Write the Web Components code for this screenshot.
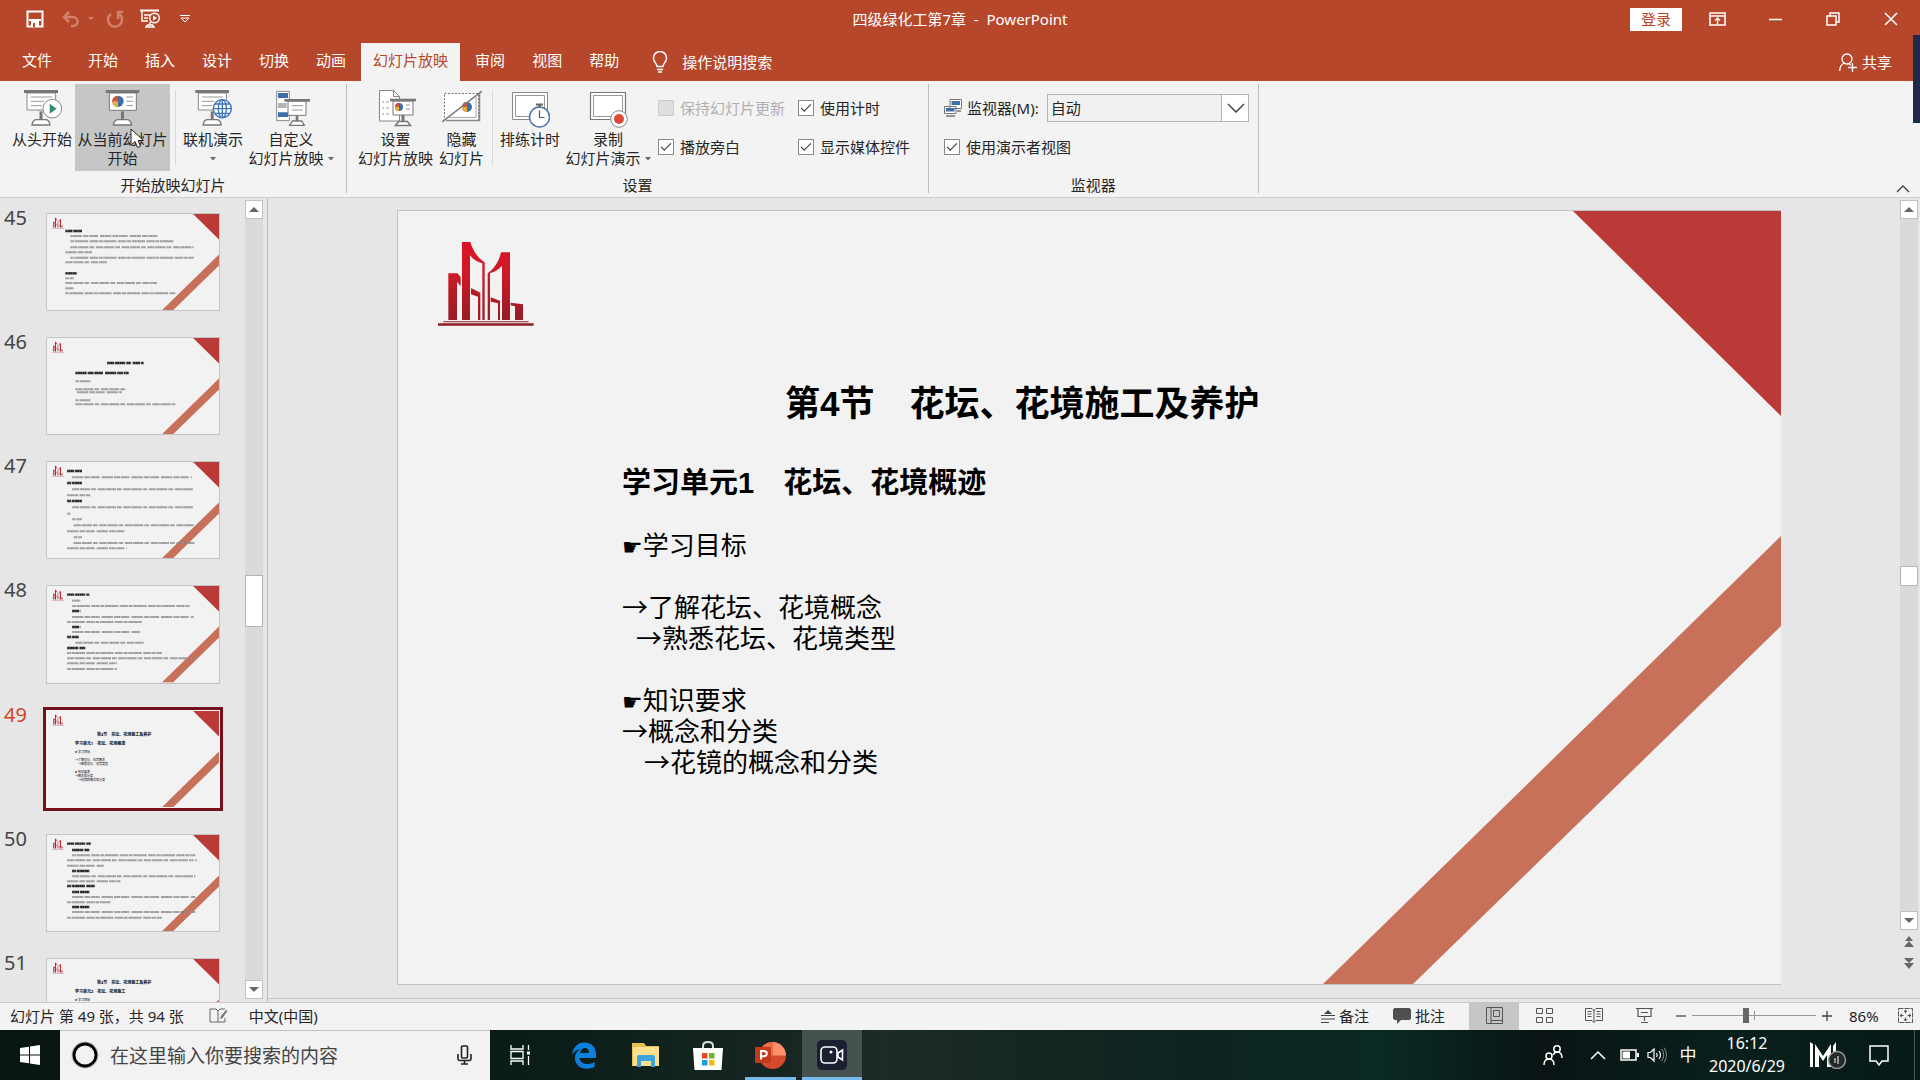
<!DOCTYPE html>
<html lang="zh-CN">
<head>
<meta charset="utf-8">
<title>四级绿化工第7章 - PowerPoint</title>
<style>
    html, body { margin: 0; height: 100%; }
    body {
        overflow: hidden;
        color: #262626;
        font: 15px/20px "Noto Sans", "Noto Sans CJK SC", sans-serif;
    }
</style>
</head>
<body>
<ppt-desktop></ppt-desktop>

<script>
// [width, height, viewBox, body]
const easel = (x, w) => `
    <g fill="#777"><rect x="${x}" y="270" width="${w}" height="9"/></g>
    <path d="M${x + w / 2} 334v28" stroke="#777" stroke-width="9"/>
    <path d="M${x + w / 2 - 27} 375q2-16 14-16h26q12 0 14 16z" fill="#fff" stroke="#777" stroke-width="4"/>`;
const pie = (x, y, r) => `
    <circle cx="${x}" cy="${y}" r="${r}" fill="#3f6fa8"/>
    <path d="M${x} ${y}V${y - r}A${r} ${r} 0 0 0 ${x} ${y + r}z" fill="#d9532f"/>
    <path d="M${x} ${y}L${x - r} ${y}A${r} ${r} 0 0 0 ${x} ${y + r}z" fill="#e9b13b"/>`;

const ICONS = {
    save: [18, 18, '0 0 18 18', '<path d="M1.5 1.5h15v15h-15z" fill="none" stroke="#fff" stroke-width="2"/><path d="M3 9h12v2H3zM5 11h8v6H5z" fill="#fff"/><path d="M7 13h2v4H7z" fill="#b7472a"/>'],
    undo: [18, 18, '0 0 18 18', '<path d="M2 7h9a4 4 0 0 1 0 9H9M7 2L2 7l5 5" fill="none" stroke="#d0806b" stroke-width="2.5"/>'],
    redo: [18, 18, '0 0 18 18', '<path d="M5 4a7 7 0 1 0 8 0M12 9V2h5" fill="none" stroke="#d0806b" stroke-width="2.5"/>'],
    dot: [6, 4, '0 0 6 4', '<path d="M0 0h6L3 3z" fill="#d0806b"/>'],
    show: [20, 20, '0 0 20 20', '<g fill="none" stroke="#fff" stroke-width="1.4"><path d="M0 1.5h19" stroke-width="2"/><path d="M2 2v10h6M4 6h6M4 9h4M10 13v3M6 18l1.500-2h5l1.500 2z"/><circle cx="14.500" cy="9" r="4.800"/></g><path d="M13 6.500v5l4-2.500z" fill="#fff"/>'],
    more: [10, 8, '0 0 10 8', '<path d="M0 .5h10M1 3h8L5 7z" fill="none" stroke="#fff"/>'],
    ribbonview: [17, 14, '0 0 17 14', '<path d="M1 1h15v12H1zM1 4h15" fill="none" stroke="#fff" stroke-width="1.600"/><path d="M8.500 12V6M6 8.500L8.500 6 11 8.500" fill="none" stroke="#fff" stroke-width="1.400"/>'],
    min: [13, 14, '0 0 13 14', '<path d="M0 7.500h13" stroke="#fff" stroke-width="1.500"/>'],
    restore: [14, 14, '0 0 14 14', '<path d="M1 4h9v9H1zM4 4V1h9v9h-3" fill="none" stroke="#fff" stroke-width="1.500"/>'],
    close: [14, 14, '0 0 14 14', '<path d="M1 1l12 12M13 1L1 13" stroke="#fff" stroke-width="1.500"/>'],
    bulb: [16, 22, '0 0 16 22', '<path d="M5 15.500c0-3-3.500-4-3.500-8.500a6.500 6.500 0 0 1 13 0c0 4.500-3.500 5.500-3.500 8.500zM5 18.500h6M6 21h4" fill="none" stroke="#fff" stroke-width="1.500"/>'],
    share: [19, 19, '0 0 19 19', '<circle cx="8" cy="6" r="5" fill="none" stroke="#fff" stroke-width="1.300"/><path d="M.700 18c0-4 2-7 5-8M10 11l2 1M9 14.500h9M13.500 10v9" fill="none" stroke="#fff" stroke-width="1.300"/>'],
    start: [40, 38, '66 270 120 114', `<path d="M81 279h86v51H81z" fill="#fff" stroke="#888" stroke-width="3"/><path d="M92 291h64M92 304h40M92 317h34" stroke="#999" stroke-width="3"/>${easel(72, 102)}<circle cx="157" cy="326" r="28" fill="#fff" stroke="#888" stroke-width="3"/><path d="M149 311v30l21-15z" fill="#2f8f6b"/>`],
    current: [40, 38, '307 270 120 114', `${easel(315, 101)}<path d="M326 279h81v52h-81z" fill="#fff" stroke="#777" stroke-width="3"/>${pie(352, 304, 17)}<path d="M377 291h20M377 304h20M377 317h20" stroke="#999" stroke-width="3"/>`],
    online: [40, 38, '579 270 120 114', `<path d="M595 279h84v51h-84z" fill="#fff" stroke="#888" stroke-width="3"/><path d="M606 291h62M606 304h36M606 317h30" stroke="#999" stroke-width="3"/>${easel(586, 101)}<g fill="#fff" stroke="#3f74b5" stroke-width="4"><circle cx="667" cy="326" r="27"/><ellipse cx="667" cy="326" rx="12" ry="27"/><path d="M667 299v54M640 326h54M645 312h44M645 340h44" fill="none"/></g>`],
    custom: [40, 38, '810 270 120 114', '<path d="M827 274h38v88h-38z" fill="#fff" stroke="#888" stroke-width="3"/><path d="M831 279h30v15h-30zM831 337h30v14h-30z" fill="#3f6fa8"/><path d="M831 309h26v15h-26z" fill="#b5b5b5"/><path d="M861 303h54v43h-54z" fill="#fff" stroke="#777" stroke-width="3"/><path d="M850 301h77" stroke="#777" stroke-width="8"/><path d="M872 317h34M872 330h34" stroke="#999" stroke-width="3"/><path d="M888 346v20" stroke="#777" stroke-width="8"/><path d="M866 376l8-13h28l8 13z" fill="#fff" stroke="#777" stroke-width="4"/>'],
    setup: [40, 38, '376 90 40 38', '<path d="M379.500 90.500h14l6 6V121h-20z" fill="#fff" stroke="#888"/><path d="M393.500 90.500v6h6" fill="none" stroke="#888"/><path d="M382 102h7M382 108h7M382 114h7" stroke="#999" stroke-dasharray="2 2 4"/><path d="M393 101h20v14h-20z" fill="#fff" stroke="#777"/><path d="M390 100h26" stroke="#777" stroke-width="2.600"/><path d="M403 115v8" stroke="#777" stroke-width="3"/><path d="M395.500 125.500l3-4h9l3 4z" fill="#fff" stroke="#777" stroke-width="1.500"/>' + pie(399, 107, 4) + '<path d="M406 105h4M406 109h4" stroke="#999"/>'],
    hide: [40, 38, '442 90 40 38', '<path d="M444.500 93.500h34v27h-34z" fill="#fff" stroke="#777" stroke-dasharray="2 1.500"/><path d="M446 120.500h33.500V93" fill="none" stroke="#888" stroke-width="1.500"/><path d="M449 117.500h27V97" fill="none" stroke="#aaa"/>' + pie(467, 107, 5) + '<path d="M442 122l40-31" stroke="#777" stroke-width="1.500"/>'],
    rehearse: [40, 38, '511 90 40 38', '<path d="M513.500 92.500h35v27h-35z" fill="#fff" stroke="#888"/><path d="M516.500 95.500h29v21h-29z" fill="none" stroke="#999"/><circle cx="540.500" cy="117" r="10" fill="#fff" stroke="#4a77b0" stroke-width="1.500"/><path d="M537 104.500h7M540.500 104v4" stroke="#666" stroke-width="2.200"/><path d="M540.500 110.500v7h5" fill="none" stroke="#555" stroke-width="1.200"/>'],
    record: [40, 38, '589 90 40 38', '<path d="M591.500 92.500h35v27h-35z" fill="#fff" stroke="#777" stroke-width="1.200"/><path d="M594.500 95.500h29v21h-29z" fill="none" stroke="#999"/><circle cx="620" cy="119" r="8.300" fill="#fff" stroke="#888"/><circle cx="620" cy="119" r="5" fill="#dd4b39"/>'],
    monitors: [18, 18, '0 0 18 18', '<path d="M6 .5h11.500v9H6zM.500 7.500H12v7H.500z" fill="#fff" stroke="#777"/><path d="M7.500 2h8.500v4H7.500zM2 9h8.500v3.500H2z" fill="#3f6fa8"/><path d="M2 17h9M13 12h4" stroke="#777" stroke-width="1.500"/>'],
    down: [18, 10, '0 0 18 10', '<path d="M1 1l8 8 8-8" fill="none" stroke="#444" stroke-width="1.500"/>'],
    collapse: [14, 8, '0 0 14 8', '<path d="M1 7l6-6 6 6" fill="none" stroke="#444" stroke-width="1.300"/>'],
    caret: [6, 4, '0 0 6 4', '<path d="M0 0h6L3 3.500z" fill="#666"/>'],
    triup: [10, 5, '0 0 10 5', '<path d="M0 5L5 0l5 5z" fill="#666"/>'],
    tridown: [10, 5, '0 0 10 5', '<path d="M0 0l5 5 5-5z" fill="#666"/>'],
    prev: [10, 11, '0 0 10 11', '<path d="M1 5l4-5 4 5zM0 11l5-6 5 6z" fill="#666"/>'],
    next: [10, 11, '0 0 10 11', '<path d="M0 0h10L5 5zM0 5h10l-5 6z" fill="#666"/>'],
    spell: [19, 15, '0 0 19 15', '<path d="M9 3v11H1V1h6l2 2 2-2h5M9 14h7v-4" fill="none" stroke="#666"/><path d="M11 11l1-3 5-6 1.500 1-5 7z" fill="#777"/>'],
    notes: [14, 14, '0 0 14 14', '<path d="M3 5l4-4 4 4z" fill="#444"/><path d="M0 6.500h14M0 10h14M0 13.500h8" stroke="#444" stroke-width="1.200"/>'],
    comment: [18, 16, '0 0 18 16', '<path d="M1.500 0h15L18 1.500v9L16.500 12H8l-4 4v-4H1.500L0 10.500v-9z" fill="#505050"/>'],
    normal: [17, 17, '0 0 17 17', '<path d="M.500.500h16v16H.500zM5 .500v16M7.500 3.500h6v6h-6zM5 13.500h11" fill="none" stroke="#555"/>'],
    sorter: [17, 17, '0 0 17 17', '<path d="M.500 1.500h6v5h-6zM10.500 1.500h6v5h-6zM.500 10.500h6v5h-6zM10.500 10.500h6v5h-6z" fill="none" stroke="#555"/>'],
    reading: [18, 17, '0 0 18 17', '<path d="M.500 1.500H7l2 2 2-2h6.500v12H11l-2 2-2-2H.500zM9 3v12M2.500 4.500h4M2.500 7h4M2.500 9.500h4M11.500 4.500h4M11.500 7h4M11.500 9.500h4" fill="none" stroke="#555"/>'],
    slideshow: [17, 17, '0 0 17 17', '<path d="M0 1.500h17M2 2v7.500h13V2M5 5.500h7M8.500 10v4M5 15.500h7" fill="none" stroke="#555" stroke-width="1.200"/>'],
    fit: [15, 15, '0 0 15 15', '<path d="M.500.500h14v14H.500z" fill="none" stroke="#555" stroke-dasharray="5 1"/><path d="M7.500 2v3.500M7.500 9.500V13M2 7.500h3.500M9.500 7.500H13M6 4l1.500-2L9 4M6 11l1.500 2L9 11M4 6L2 7.500 4 9M11 6l2 1.500L11 9" fill="none" stroke="#555"/>'],
    minus: [10, 10, '0 0 10 10', '<path d="M0 5h10" stroke="#444" stroke-width="1.300"/>'],
    plus: [10, 10, '0 0 10 10', '<path d="M0 5h10M5 0v10" stroke="#444" stroke-width="1.300"/>'],
    windows: [20, 20, '0 0 20 20', '<path d="M0 3l9-1.300v7.800H0zM10 1.500L20 0v9.500H10zM0 10.500h9v7.800L0 17zM10 10.500h10V20l-10-1.500z" fill="#fff"/>'],
    cortana: [28, 28, '0 0 28 28', '<circle cx="14" cy="14" r="12.500" fill="none" stroke="#bbb" stroke-width="2"/><circle cx="14" cy="14" r="11" fill="none" stroke="#000" stroke-width="2.800"/>'],
    mic: [15, 20, '0 0 15 20', '<rect x="4.500" y="1" width="6" height="12" rx="1" fill="none" stroke="#222" stroke-width="1.600"/><path d="M1 9v4.500q0 2 2 2h9q2 0 2-2V9M7.500 15v4M4 19h7" fill="none" stroke="#222" stroke-width="1.600"/>'],
    taskview: [21, 20, '0 0 21 20', '<path d="M1 0v4h12V0M1 20v-4h12v4M1 6.500h12v7H1zM18.500 0v5M18.500 11v9" fill="none" stroke="#fff" stroke-width="1.300"/><path d="M17 6.500h3v3h-3z" fill="#fff"/>'],
    edge: [26, 27, '0 0 26 27', '<path d="M1 13C2 5 7 .500 13.500.500 21 .500 25 6 25 12v4H8.500c.500 4 4 6 8 6 3 0 5-.700 7-2v5c-2.500 1.300-5 1.700-8 1.700C8.500 26.700 4 22 4 16c0-4 2-7 5-9C5 8 2.500 10 1 13zm8-2h9c0-3-1.500-5-4-5s-4.500 2-5 5z" fill="#0e7fdc"/>'],
    folder: [28, 24, '0 0 28 24', '<path d="M0 0h12l2 3h13v20H0z" fill="#e8bf56"/><path d="M1 4h26v19H1z" fill="#fbe08d"/><path d="M5 24V14q0-2 2-2h14q2 0 2 2v10h-4v-6H9v6z" fill="#3fa4dd"/>'],
    store: [30, 29, '0 0 30 29', '<path d="M10 8V5q0-4 5-4t5 4v3" fill="none" stroke="#ddd" stroke-width="2"/><path d="M0 7h30l-1.500 22h-27z" fill="#fff"/><path d="M9 12h5.500v5.500H9z" fill="#e8482b"/><path d="M16 12h5.500v5.500H16z" fill="#6fb52c"/><path d="M9 19h5.500v5.500H9z" fill="#1b9de2"/><path d="M16 19h5.500v5.500H16z" fill="#fab802"/>'],
    ppt: [31, 27, '0 0 31 27', '<circle cx="17.500" cy="13.500" r="13.500" fill="#d6492b"/><path d="M17.500 0A13.500 13.500 0 0 1 31 13.500H17.500z" fill="#ff8f6b"/><path d="M4 13.500h13.500V0A13.500 13.500 0 0 0 4 13.500z" fill="#ed6c47"/><rect y="5" width="16" height="16" rx="1" fill="#c13b1b"/><path d="M6 17.500V9h3q2.800 0 2.800 2.600T9 14.200H6" fill="none" stroke="#fff" stroke-width="2"/>'],
    recorder: [30, 30, '0 0 30 30', '<rect width="30" height="30" rx="5" fill="#1b2030"/><rect x="4" y="7" width="16" height="16" rx="4" fill="none" stroke="#fff" stroke-width="1.600"/><circle cx="14" cy="12" r="1.500" fill="#fff"/><path d="M21 13l4.500-3v10L21 17z" fill="none" stroke="#fff" stroke-width="1.600"/>'],
    people: [20, 20, '0 0 20 20', '<g fill="none" stroke="#fff" stroke-width="1.500"><circle cx="6" cy="11" r="3"/><path d="M1 20c0-4 2-6 5-6s5 2 5 6"/><circle cx="14" cy="4" r="3.200"/><path d="M10 10c1-2 2-3 4-3 3 0 5 2 5 6"/></g>'],
    trayup: [16, 10, '0 0 16 10', '<path d="M1 9l7-7 7 7" fill="none" stroke="#fff" stroke-width="1.500"/>'],
    battery: [19, 12, '0 0 19 12', '<path d="M1 1h15v10H1z" fill="none" stroke="#fff" stroke-width="1.500"/><path d="M2.500 2.500H10v7H2.500zM17 4h2v4h-2z" fill="#fff"/>'],
    sound: [20, 16, '0 0 20 16', '<path d="M1 5.500h2.500L7 2v12l-3.500-3.500H1zM9.500 6q1.500 2 0 4M12 4q3 4 0 8" fill="none" stroke="#fff" stroke-width="1.200"/><path d="M14.500 2q4.500 6 0 12M17 .500q5 7.500 0 15" fill="none" stroke="#888"/>'],
    mlogo: [38, 28, '0 0 38 28', '<path d="M1 1l3 2v23H1zM6 26V3l8 12 8-12v23h-4V14l-4 6-4-6v12zM24 26V5l3-4v25z" fill="#fff"/><circle cx="28" cy="19" r="8.500" fill="#222b29" stroke="#999" stroke-width="1.500"/><path d="M29 15v8M26 17v5" stroke="#bbb" stroke-width="1.500"/>'],
    notify: [20, 21, '0 0 20 21', '<path d="M1 1h18v15h-6l-3 4-3-4H1z" fill="none" stroke="#fff" stroke-width="1.500"/>'],
    cursor: [15, 21, '0 0 15 21', '<path d="M1 1v16l4-3.500 2.500 6 3-1.300L8 12.500h5.500z" fill="#fff" stroke="#222"/>']
};

class AppIcon extends HTMLElement {
    connectedCallback() {
        const [w, h, box, body] = ICONS[this.getAttribute('name')];
        this.attachShadow({ mode: 'open' }).innerHTML = `
            <style>:host { display: inline-flex; flex: none; } svg { display: block; }</style>
            <svg width="${w}" height="${h}" viewBox="${box}" aria-hidden="true">${body}</svg>`;
    }
}

class PptDesktop extends HTMLElement {
    connectedCallback() {
        this.attachShadow({ mode: 'open' }).innerHTML = `
            <style>
                :host { display: grid; grid-template-rows: auto auto auto minmax(0, 1fr) auto auto; height: 100vh; position: relative; }
                .edge { position: absolute; right: 0; top: 35px; width: 7px; height: 88px; background: #1f2a48; }
                .pointer { position: absolute; left: 130px; top: 128px; }
            </style>
            <title-bar></title-bar>
            <tab-strip></tab-strip>
            <ppt-ribbon></ppt-ribbon>
            <work-area></work-area>
            <status-bar></status-bar>
            <task-bar></task-bar>
            <div class="edge"></div>
            <app-icon class="pointer" name="cursor"></app-icon>`;
    }
}

class TitleBar extends HTMLElement {
    connectedCallback() {
        this.attachShadow({ mode: 'open' }).innerHTML = `
            <style>
                :host { display: grid; grid-template-columns: 1fr auto 1fr; align-items: center; height: 38px; padding-bottom: 5px; background: #b7472a; color: #fff; }
                button { display: flex; align-items: center; justify-content: center; padding: 0; border: 0; background: none; font: inherit; }
                .quick { display: flex; align-items: center; padding-left: 26px; }
                .quick button { margin-right: 16px; }
                .quick .undo { margin-right: 8px; margin-left: 2px; }
                .quick .small { margin-right: 12px; }
                .quick .show { margin-right: 20px; }
                .title { white-space: pre; }
                .right { display: flex; justify-content: flex-end; align-items: center; }
                .right button { width: 58px; height: 38px; }
                .right .login { width: 52px; height: 23px; margin-right: 6px; background: #fff; color: #b7472a; }
            </style>
            <div class="quick">
                <button aria-label="保存"><app-icon name="save"></app-icon></button>
                <button class="undo" aria-label="撤消"><app-icon name="undo"></app-icon></button>
                <button class="small" aria-label="撤消选项"><app-icon name="dot"></app-icon></button>
                <button aria-label="恢复"><app-icon name="redo"></app-icon></button>
                <button class="show" aria-label="从头放映"><app-icon name="show"></app-icon></button>
                <button aria-label="自定义工具栏"><app-icon name="more"></app-icon></button>
            </div>
            <div class="title">四级绿化工第7章  -  PowerPoint</div>
            <div class="right">
                <button class="login">登录</button>
                <button aria-label="功能区显示选项"><app-icon name="ribbonview"></app-icon></button>
                <button aria-label="最小化"><app-icon name="min"></app-icon></button>
                <button aria-label="向下还原"><app-icon name="restore"></app-icon></button>
                <button aria-label="关闭"><app-icon name="close"></app-icon></button>
            </div>`;
    }
}

class TabStrip extends HTMLElement {
    connectedCallback() {
        const tabs = ['开始', '插入', '设计', '切换', '动画', '幻灯片放映', '审阅', '视图', '帮助'];
        this.attachShadow({ mode: 'open' }).innerHTML = `
            <style>
                :host { display: flex; gap: 3px; height: 38px; background: #b7472a; }
                button { display: flex; align-items: center; gap: 14px; padding: 0 12px 4px; border: 0; background: none; color: #fff; font: inherit; }
                button.file { padding-right: 21px; padding-left: 22px; }
                button.active { background: #f3f3f3; color: #b7472a; }
                button.tell { padding-left: 18px; padding-bottom: 1px; }
                button.share { margin-left: auto; padding-right: 28px; padding-bottom: 0; gap: 4px; }
            </style>
            <button class="file">文件</button>
            ${tabs.map(t => `<button class="${t === '幻灯片放映' ? 'active' : ''}">${t}</button>`).join('')}
            <button class="tell"><app-icon name="bulb"></app-icon>操作说明搜索</button>
            <button class="share"><app-icon name="share"></app-icon>共享</button>`;
    }
}

class RibbonGroup extends HTMLElement {
    connectedCallback() {
        this.attachShadow({ mode: 'open' }).innerHTML = `
            <style>
                :host { display: block; height: 109px; border-right: 1px solid #bdbdbd; }
                .items { display: flex; height: 91px; padding: var(--pad); box-sizing: border-box; }
                .name { text-align: center; line-height: 20px; }
            </style>
            <div class="items"><slot></slot></div>
            <div class="name">${this.getAttribute('name')}</div>`;
    }
}

class RibbonButton extends HTMLElement {
    connectedCallback() {
        this.attachShadow({ mode: 'open' }).innerHTML = `
            <style>
                :host { display: flex; height: 87px; }
                button { flex: 1; display: flex; flex-direction: column; align-items: center; padding: 6px 0 0; border: 0; background: none; color: inherit; font: inherit; line-height: 19px; white-space: nowrap; }
                :host([hot]) button { background: #c6c6c6; }
                app-icon { margin-bottom: 2px; }
                span { display: flex; align-items: center; gap: 4px; min-height: 19px; }
                span app-icon { margin: 0; }
            </style>
            <button>
                <app-icon name="${this.getAttribute('icon')}"></app-icon>
                <span>${this.getAttribute('top')}</span>
                <span>${this.getAttribute('bottom') || ''}${this.hasAttribute('menu') ? '<app-icon name="caret"></app-icon>' : ''}</span>
            </button>`;
    }
}

class RibbonCheck extends HTMLElement {
    connectedCallback() {
        const state = this.hasAttribute('off') ? 'disabled' : 'checked';
        this.attachShadow({ mode: 'open' }).innerHTML = `
            <style>
                :host { display: flex; align-items: center; gap: 6px; height: 28px; }
                input { appearance: none; display: grid; place-items: center; width: 16px; height: 16px; margin: 0; border: 1px solid #8a8a8a; background: #fff; }
                input:checked::before { content: ""; width: 9px; height: 4px; margin-bottom: 3px; border: solid #333; border-width: 0 0 1px 1px; transform: rotate(-45deg); }
                input:disabled { border-color: #ccc; background: #dedede; }
                input:disabled + label { color: #b0b0b0; }
            </style>
            <input type="checkbox" id="box" ${state}>
            <label for="box"><slot></slot></label>`;
    }
}

class MonitorPicker extends HTMLElement {
    connectedCallback() {
        this.attachShadow({ mode: 'open' }).innerHTML = `
            <style>
                :host { display: flex; align-items: center; height: 28px; }
                label { margin: 0 8px 0 5px; }
                .field { display: grid; width: 202px; height: 28px; }
                .field > * { grid-area: 1 / 1; }
                select { appearance: none; padding: 0 3px; border: 1px solid #b4b4b4; border-radius: 0; background: linear-gradient(#b4b4b4, #b4b4b4) right 26px top / 1px 100% no-repeat, linear-gradient(#fff, #fff) right / 26px 100% no-repeat, #f1f1f1; color: inherit; font: inherit; }
                .field app-icon { place-self: center end; margin-right: 4px; pointer-events: none; }
            </style>
            <app-icon name="monitors"></app-icon>
            <label for="monitor">监视器(M):</label>
            <div class="field">
                <select id="monitor"><option>自动</option></select>
                <app-icon name="down"></app-icon>
            </div>`;
    }
}

class PptRibbon extends HTMLElement {
    connectedCallback() {
        this.attachShadow({ mode: 'open' }).innerHTML = `
            <style>
                :host { display: flex; height: 113px; padding-top: 3px; background: #f3f3f3; border-bottom: 1px solid #cfcfcf; }
                .g1 { --pad: 0 10px 0 9px; }
                .g2 { --pad: 0 18px 0 8px; }
                .g3 { --pad: 0 9px 0 15px; }
                .w1 { width: 66px; } .w2 { width: 95px; } .w3 { width: 90px; } .w4 { width: 81px; } .w5 { width: 51px; }
                .line { width: 1px; height: 75px; margin: 6px 4px 0 5px; background: #d8d8d8; }
                .col { display: flex; flex-direction: column; gap: 11px; padding-top: 10px; }
                .col.first { margin: 0 13px 0 5px; }
                .fold { margin: auto 10px 4px auto; padding: 0; border: 0; background: none; display: flex; }
            </style>
            <ribbon-group class="g1" name="开始放映幻灯片">
                <ribbon-button class="w1" icon="start" top="从头开始"></ribbon-button>
                <ribbon-button class="w2" icon="current" top="从当前幻灯片" bottom="开始" hot></ribbon-button>
                <div class="line"></div>
                <ribbon-button class="w1" icon="online" top="联机演示" menu></ribbon-button>
                <ribbon-button class="w3" icon="custom" top="自定义" bottom="幻灯片放映" menu></ribbon-button>
            </ribbon-group>
            <ribbon-group class="g2" name="设置">
                <ribbon-button class="w4" icon="setup" top="设置" bottom="幻灯片放映"></ribbon-button>
                <ribbon-button class="w5" icon="hide" top="隐藏" bottom="幻灯片"></ribbon-button>
                <div class="line"></div>
                <ribbon-button class="w1" icon="rehearse" top="排练计时"></ribbon-button>
                <ribbon-button class="w3" icon="record" top="录制" bottom="幻灯片演示" menu></ribbon-button>
                <div class="col first">
                    <ribbon-check off>保持幻灯片更新</ribbon-check>
                    <ribbon-check>播放旁白</ribbon-check>
                </div>
                <div class="col">
                    <ribbon-check>使用计时</ribbon-check>
                    <ribbon-check>显示媒体控件</ribbon-check>
                </div>
            </ribbon-group>
            <ribbon-group class="g3" name="监视器">
                <div class="col">
                    <monitor-picker></monitor-picker>
                    <ribbon-check>使用演示者视图</ribbon-check>
                </div>
            </ribbon-group>
            <button class="fold" aria-label="折叠功能区"><app-icon name="collapse"></app-icon></button>`;
    }
}

// Slide backdrop, shared by the stage and the thumbnails.
class DeckArt extends HTMLElement {
    connectedCallback() {
        this.attachShadow({ mode: 'open' }).innerHTML = `
            <style>:host { display: block; } svg { display: block; width: 100%; height: auto; }</style>
            <svg viewBox="0 0 1383 773" aria-hidden="true">
                <defs><linearGradient id="red" x1="0" y1="126" x2="0" y2="377" gradientUnits="userSpaceOnUse">
                    <stop offset="0" stop-color="#dc1226"/><stop offset=".4" stop-color="#cc1a26"/><stop offset="1" stop-color="#8e1d26"/>
                </linearGradient></defs>
                <path d="M0 0h1383v773H0z" fill="#f2f2f2"/>
                <path d="M1175 0h208v205z" fill="#b93a36"/>
                <path d="M1383 325v90l-368 358h-90z" fill="#c7705a"/>
                <g transform="translate(-8 -11) scale(.33333)" fill="url(#red)">
                    <path d="M175 220h28l9 12v26l-11-13v115h-26z"/>
                    <path d="M216 126h25c9 29 21 46 43 61v173h-7V190c-15-4-29-12-37-24v194h-24z"/>
                    <path d="M293 360V220c20-15 34-35 40-63h27v203h-24V197c-10 11-20 17-36 23v140z"/>
                    <path d="M243 264l28 14v82h-7v-70l-21-7zM302 292l28 10v58h-6v-50l-22-5zM362 308l37 5v47h-24v-41l-13-3z"/>
                    <path d="M144 370h287v7H144zM160 364h256v3H160z"/>
                </g>
                ${this.lines()}
            </svg>`;
    }

    // Rows of body copy too small to read: [x1, x2, y, bold].
    lines() {
        const rows = PAGES[this.getAttribute('page')] || [];
        const dashes = ['22 2 31 3 14 5', '34 3 18 2 26 6', '12 2 40 4 25 2'];
        return '<g transform="scale(2.68)">' + rows.map(([a, b, y, bold], i) =>
            `<path d="M${a} ${y}H${b}" stroke="${bold ? '#222' : '#777'}" stroke-width="${bold ? 7 : 6}" stroke-dasharray="${dashes[i % 3]}" opacity="${bold ? 1 : .7}"/>
            <path d="M${a} ${y}H${b}" stroke="#f2f2f2" stroke-width="7" stroke-dasharray="1 4 2 3 1 5" opacity=".4"/>`).join('') + '</g>';
    }
}

const PAGES = {
    45: [[55, 105, 51, 1], [70, 335, 66], [70, 380, 82], [70, 440, 100], [55, 135, 115], [70, 440, 131], [55, 180, 145], [55, 90, 178, 1], [55, 80, 193], [55, 330, 207], [55, 80, 223], [55, 385, 238]],
    46: [[180, 290, 75, 1], [85, 245, 105, 1], [85, 130, 130], [85, 240, 154], [90, 225, 163], [85, 130, 187], [85, 385, 199]],
    47: [[60, 105, 27, 1], [75, 435, 46], [60, 105, 63, 1], [75, 440, 82], [60, 130, 100], [60, 105, 117, 1], [75, 440, 136], [60, 70, 155], [75, 105, 172], [80, 440, 190], [60, 235, 208], [80, 105, 226], [80, 445, 243], [60, 240, 259]],
    48: [[60, 127, 26, 1], [75, 100, 44], [75, 430, 60], [75, 100, 75, 1], [75, 440, 93], [60, 285, 108], [75, 100, 123, 1], [75, 280, 138], [60, 95, 153, 1], [85, 290, 170], [60, 115, 186, 1], [60, 345, 201], [60, 450, 217], [60, 210, 232], [60, 210, 249]],
    50: [[60, 135, 26, 1], [75, 127, 45, 1], [75, 445, 61], [60, 450, 76], [60, 170, 92], [75, 127, 108, 1], [75, 445, 124], [60, 220, 139], [60, 145, 153, 1], [75, 127, 171, 1], [75, 445, 186], [60, 190, 202], [75, 127, 216, 1], [75, 445, 231], [60, 345, 248]]
};

class SlideThumb extends HTMLElement {
    connectedCallback() {
        const page = this.getAttribute('page');
        this.attachShadow({ mode: 'open' }).innerHTML = `
            <style>
                :host { display: grid; grid-template-columns: 42px 174px; align-items: start; padding-left: 4px; }
                .num { font-size: 20px; line-height: 20px; color: #444; }
                .page { display: grid; margin-top: 5px; border: 1px solid #c4c4c4; }
                .page > * { grid-area: 1 / 1; }
                .text { height: 0; padding: 22px 0 0 28px; color: #000; font: 3px/4px Roboto, "Noto Sans CJK SC", sans-serif; white-space: nowrap; }
                :host([selected]) .num { color: #d04526; }
                :host([selected]) .page { border-color: #f2f2f2; outline: 3px solid #750f1c; }
                ::slotted(*) { margin: 0; min-height: 4px; }
                ::slotted(h3) { padding: 0 0 5px 22px; font-size: 4px; }
                ::slotted(h4) { padding-bottom: 4px; font-size: 4px; }
            </style>
            <div class="num">${page}</div>
            <div class="page">
                <deck-art page="${page}"></deck-art>
                <div class="text"><slot></slot></div>
            </div>`;
    }
}

class ScrollRail extends HTMLElement {
    connectedCallback() {
        this.attachShadow({ mode: 'open' }).innerHTML = `
            <style>
                :host { display: flex; flex-direction: column; width: 18px; }
                button { display: flex; flex: none; align-items: center; justify-content: center; width: 18px; height: 19px; padding: 0; border: 1px solid #c0c0c0; background: #fff; box-sizing: border-box; }
                .track { flex: 1; display: grid; grid-template-rows: 107fr auto var(--rest, 106fr); background: #dadada; }
                .knob { grid-row: 2; height: var(--knob, 52px); border: 1px solid #b4b4b4; background: #fff; box-sizing: border-box; }
            </style>
            <button aria-label="向上滚动"><app-icon name="triup"></app-icon></button>
            <div class="track"><div class="knob"></div></div>
            <button aria-label="向下滚动"><app-icon name="tridown"></app-icon></button>
            <slot></slot>`;
    }
}

class DeckSlide extends HTMLElement {
    connectedCallback() {
        this.attachShadow({ mode: 'open' }).innerHTML = `
            <style>
                :host { display: grid; border: solid #c2c2c2; border-width: 1px 0 1px 1px; color: #000; font-family: "Liberation Sans", "Noto Sans CJK SC", sans-serif; }
                deck-art, .text { grid-area: 1 / 1; }
                .text { padding: 169px 0 0 224px; }
            </style>
            <deck-art></deck-art>
            <div class="text"><slot></slot></div>`;
    }
}

class WorkArea extends HTMLElement {
    connectedCallback() {
        this.attachShadow({ mode: 'open' }).innerHTML = `
            <style>
                :host { display: flex; min-height: 0; background: #e6e6e6; }
                .pane { display: flex; justify-content: space-between; width: 263px; padding-right: 4px; border-right: 1px solid #bebebe; }
                .thumbs { display: flex; flex-direction: column; gap: 21px; padding: 10px 0 0; overflow: hidden; width: 226px; }
                .thumbs > * { flex: none; }
                .pane scroll-rail { margin: 2px 0 3px; }
                .stage { flex: 1; display: flex; align-items: flex-start; margin-bottom: 3px; border-bottom: 1px solid #c4c4c4; }
                deck-slide { flex: 1; margin: 12px 119px 0 129px; }
                .stage scroll-rail { align-self: stretch; margin: 2px 2px 24px 0; --knob: 20px; --rest: 100fr; }
                .step { display: flex; align-items: center; justify-content: center; height: 22px; padding: 0; border: 0; background: none; }
                h1 { margin: 0 0 0 163px; font-size: 35px; line-height: 48px; }
                h2 { margin: 35px 0 28px; font-size: 29px; line-height: 40px; }
                .body p { margin: 0; font: 26px/31px Roboto, "Noto Sans CJK SC", sans-serif; min-height: 31px; }
                .body .in { padding-left: 14px; }
                .body .in2 { padding-left: 22px; }
                .hand { font: 23px/23px "Liberation Sans", "DejaVu Sans", sans-serif; }
            </style>
            <div class="pane">
                <div class="thumbs">
                    <slide-thumb page="45"></slide-thumb>
                    <slide-thumb page="46"></slide-thumb>
                    <slide-thumb page="47"></slide-thumb>
                    <slide-thumb page="48"></slide-thumb>
                    <slide-thumb page="49" selected>
                        <h3>第4节　花坛、花境施工及养护</h3>
                        <h4>学习单元1　花坛、花境概迹</h4>
                        <p>☛学习目标</p>
                        <p></p>
                        <p>→了解花坛、花境概念</p>
                        <p>　→熟悉花坛、花境类型</p>
                        <p></p>
                        <p>☛知识要求</p>
                        <p>→概念和分类</p>
                        <p>　→花镜的概念和分类</p>
                    </slide-thumb>
                    <slide-thumb page="50"></slide-thumb>
                    <slide-thumb page="51">
                        <h3>第4节　花坛、花境施工及养护</h3>
                        <h4>学习单元2　花坛、花境施工</h4>
                        <p>☛学习目标</p>
                    </slide-thumb>
                </div>
                <scroll-rail></scroll-rail>
            </div>
            <div class="stage">
                <deck-slide class="body">
                    <h1>第4节　花坛、花境施工及养护</h1>
                    <h2>学习单元1　花坛、花境概迹</h2>
                    <p><span class="hand">☛</span>学习目标</p>
                    <p></p>
                    <p>→了解花坛、花境概念</p>
                    <p class="in">→熟悉花坛、花境类型</p>
                    <p></p>
                    <p><span class="hand">☛</span>知识要求</p>
                    <p>→概念和分类</p>
                    <p class="in2">→花镜的概念和分类</p>
                </deck-slide>
                <scroll-rail>
                    <button class="step" aria-label="上一张幻灯片"><app-icon name="prev"></app-icon></button>
                    <button class="step" aria-label="下一张幻灯片"><app-icon name="next"></app-icon></button>
                </scroll-rail>
            </div>`;
    }
}

class StatusBar extends HTMLElement {
    connectedCallback() {
        this.attachShadow({ mode: 'open' }).innerHTML = `
            <style>
                :host { display: flex; align-items: center; height: 27px; padding: 0 7px 0 10px; border-top: 1px solid #c8c8c8; background: #f3f3f3; }
                button { display: flex; align-items: center; gap: 4px; height: 100%; padding: 0 0 2px; border: 0; background: none; color: inherit; font: inherit; box-sizing: border-box; }
                span, output, input { padding-bottom: 2px; }
                .spell { margin: 0 21px 0 25px; }
                .notes { margin: 0 24px 0 auto; }
                .view { justify-content: center; width: 50px; }
                .view.on { margin-left: 24px; background: #c6c6c6; }
                input { appearance: none; width: 124px; height: 15px; margin: 0 6px; background: linear-gradient(#999, #999) 0 7px / 100% 1px no-repeat, linear-gradient(#999, #999) center 3px / 1px 9px no-repeat; }
                input::-webkit-slider-thumb { appearance: none; width: 6px; height: 15px; background: #666; }
                .zoomout { margin-left: 7px; }
                output { width: 33px; margin: 0 16px 0 17px; }
            </style>
            <span>幻灯片 第 49 张，共 94 张</span>
            <button class="spell" aria-label="拼写检查"><app-icon name="spell"></app-icon></button>
            <button>中文(中国)</button>
            <button class="notes"><app-icon name="notes"></app-icon>备注</button>
            <button><app-icon name="comment"></app-icon>批注</button>
            <button class="view on" aria-label="普通"><app-icon name="normal"></app-icon></button>
            <button class="view" aria-label="幻灯片浏览"><app-icon name="sorter"></app-icon></button>
            <button class="view" aria-label="阅读视图"><app-icon name="reading"></app-icon></button>
            <button class="view" aria-label="幻灯片放映"><app-icon name="slideshow"></app-icon></button>
            <button class="zoomout" aria-label="缩小"><app-icon name="minus"></app-icon></button>
            <input type="range" min="0" max="100" value="43" aria-label="缩放">
            <button aria-label="放大"><app-icon name="plus"></app-icon></button>
            <output>86%</output>
            <button aria-label="适应窗口"><app-icon name="fit"></app-icon></button>`;
    }
}

class TaskBar extends HTMLElement {
    connectedCallback() {
        this.attachShadow({ mode: 'open' }).innerHTML = `
            <style>
                :host { display: flex; height: 50px; background: linear-gradient(90deg, #081513 0, #0b1d19 28%, #1d2a26 46%, #0d2420 62%, #0a2a22 72%, #091413 80%, #08201c 90%, #061a17 100%); color: #fff; }
                button { display: flex; align-items: center; justify-content: center; padding: 0; border: 0; background: none; color: inherit; font: inherit; }
                .start { width: 60px; }
                .search { display: flex; align-items: center; width: 430px; padding: 0 18px 2px 11px; border-top: 1px solid #c4c4c4; background: #f2f2f2; box-sizing: border-box; }
                .search input { flex: 1; min-width: 0; margin-left: 11px; padding: 0; border: 0; outline: 0; background: none; font: 19px/28px "Noto Sans CJK SC", sans-serif; }
                .search input::placeholder { color: #444; }
                .apps { display: flex; gap: 2px; padding-left: 2px; }
                .apps button { width: 60px; box-sizing: border-box; }
                .apps .views { padding-right: 4px; }
                .apps .run { background: linear-gradient(#76b9ed, #76b9ed) bottom / 51px 3px no-repeat; }
                .apps .now { background: #46524f; border: solid #76b9ed; border-width: 3px 0; border-top-color: #46524f; }
                .tray { display: grid; grid-template-columns: 48px 42px 20px 36px 26px 92px 70px 32px; margin: 0 19px 0 auto; }
                .tray .ime { font-size: 17px; }
                .clock { flex-direction: column; line-height: 23px; font-size: 16px; }
                .peek { width: 5px; border-left: 1px solid #4a5c58; }
            </style>
            <button class="start" aria-label="开始"><app-icon name="windows"></app-icon></button>
            <div class="search">
                <app-icon name="cortana"></app-icon>
                <input type="text" placeholder="在这里输入你要搜索的内容" aria-label="在这里输入你要搜索的内容">
                <app-icon name="mic"></app-icon>
            </div>
            <div class="apps">
                <button class="views" aria-label="任务视图"><app-icon name="taskview"></app-icon></button>
                <button aria-label="Edge"><app-icon name="edge"></app-icon></button>
                <button aria-label="文件资源管理器"><app-icon name="folder"></app-icon></button>
                <button aria-label="应用商店"><app-icon name="store"></app-icon></button>
                <button class="run" aria-label="PowerPoint"><app-icon name="ppt"></app-icon></button>
                <button class="now" aria-label="录屏"><app-icon name="recorder"></app-icon></button>
            </div>
            <div class="tray">
                <button aria-label="人脉"><app-icon name="people"></app-icon></button>
                <button aria-label="显示隐藏的图标"><app-icon name="trayup"></app-icon></button>
                <button aria-label="电池"><app-icon name="battery"></app-icon></button>
                <button aria-label="音量"><app-icon name="sound"></app-icon></button>
                <button class="ime">中</button>
                <button class="clock"><span>16:12</span><span>2020/6/29</span></button>
                <button aria-label="输入法"><app-icon name="mlogo"></app-icon></button>
                <button aria-label="通知"><app-icon name="notify"></app-icon></button>
            </div>
            <div class="peek"></div>`;
    }
}

customElements.define('app-icon', AppIcon);
customElements.define('title-bar', TitleBar);
customElements.define('tab-strip', TabStrip);
customElements.define('ribbon-group', RibbonGroup);
customElements.define('ribbon-button', RibbonButton);
customElements.define('ribbon-check', RibbonCheck);
customElements.define('monitor-picker', MonitorPicker);
customElements.define('ppt-ribbon', PptRibbon);
customElements.define('deck-art', DeckArt);
customElements.define('slide-thumb', SlideThumb);
customElements.define('scroll-rail', ScrollRail);
customElements.define('deck-slide', DeckSlide);
customElements.define('work-area', WorkArea);
customElements.define('status-bar', StatusBar);
customElements.define('task-bar', TaskBar);
customElements.define('ppt-desktop', PptDesktop);
</script>
</body>
</html>
